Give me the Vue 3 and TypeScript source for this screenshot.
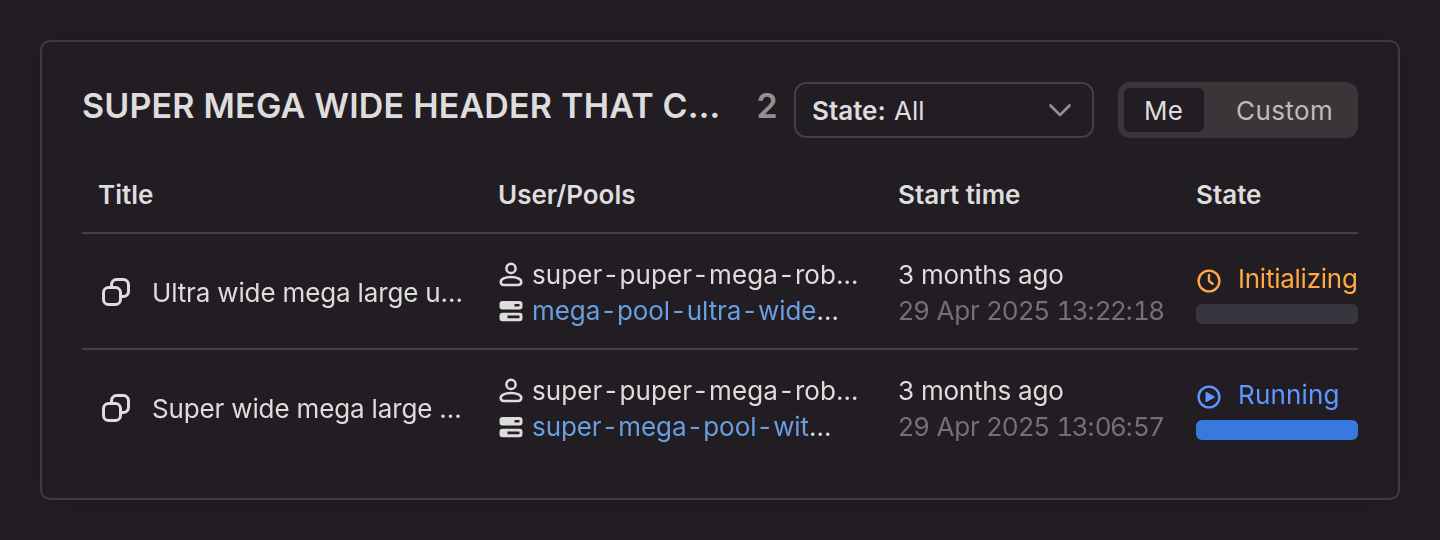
<script setup lang="ts">
interface Operation {
  title: string
  user: string
  pool: string
  relative: string
  date: string
  time: string
  state: 'initializing' | 'running'
  label: string
}

const columns: string[] = ['Title', 'User/Pools', 'Start time', 'State']

const operations: Operation[] = [
  {
    title: 'Ultra wide mega large u…',
    user: 'super-puper-mega-rob…',
    pool: 'mega-pool-ultra-wide',
    relative: '3 months ago',
    date: '29 Apr 2025',
    time: '13:22:18',
    state: 'initializing',
    label: 'Initializing',
  },
  {
    title: 'Super wide mega large …',
    user: 'super-puper-mega-rob…',
    pool: 'super-mega-pool-wit',
    relative: '3 months ago',
    date: '29 Apr 2025',
    time: '13:06:57',
    state: 'running',
    label: 'Running',
  },
]

// Splits a string into runs so that colons keep their proportional width.
function runs(text: string): string[] {
  return text.split(/(:)/)
}
</script>

<template>
  <main class="page">
    <section class="card">
      <header class="head">
        <h2 class="heading">SUPER MEGA WIDE HEADER THAT C…</h2>
        <span class="count">2</span>
        <button class="select" type="button">
          <span class="value"><b>State:</b> All</span>
          <svg class="chevron" width="24" height="24" viewBox="0 0 24 24">
            <path d="M2.500 7.500 12 17l9.500-9.500" fill="none" stroke="currentColor" stroke-width="2.800" stroke-linecap="round" stroke-linejoin="round" />
          </svg>
        </button>
        <div class="switch">
          <button class="option active" type="button">Me</button>
          <button class="option" type="button">Custom</button>
        </div>
      </header>

      <div class="row labels">
        <div v-for="column in columns" :key="column" class="cell">{{ column }}</div>
      </div>
      <div class="body">
        <div v-for="op in operations" :key="op.time" class="row item">
          <div class="cell title">
            <svg width="32" height="32" viewBox="0 0 32 32" fill="none" stroke="currentColor" stroke-width="3">
              <rect x="3.500" y="11.500" width="17" height="17" rx="5" />
              <path d="M11.500 11.500V8.500a5 5 0 0 1 5-5h7a5 5 0 0 1 5 5v7a5 5 0 0 1-5 5h-3" />
            </svg>
            <span>{{ op.title }}</span>
          </div>
          <div class="cell stack">
            <div class="line">
              <svg width="26" height="26" viewBox="0 0 26 26" fill="none" stroke="currentColor" stroke-width="2.500">
                <circle cx="13" cy="6.400" r="4.600" />
                <path d="M13 15c6 0 10.300 2.200 10.300 5 0 2-1.500 2.900-3.300 2.900H6c-1.800 0-3.300-.9-3.300-2.900 0-2.800 4.300-5 10.300-5z" />
              </svg>
              <span class="name">{{ op.user }}</span>
            </div>
            <div class="line">
              <svg width="26" height="26" viewBox="0 0 26 26">
                <path fill="currentColor" fill-rule="evenodd" d="M4.500 3h17a3 3 0 0 1 3 3v2.500a3 3 0 0 1-3 3h-17a3 3 0 0 1-3-3V6a3 3 0 0 1 3-3zM16.500 6v2.600h5V6zM4.500 14.700h17a3 3 0 0 1 3 3v2.500a3 3 0 0 1-3 3h-17a3 3 0 0 1-3-3v-2.500a3 3 0 0 1 3-3zM9.500 17.500v2.800h12v-2.800z" />
              </svg>
              <span class="name"><a class="link">{{ op.pool }}</a>…</span>
            </div>
          </div>
          <div class="cell stack">
            <div class="line relative">{{ op.relative }}</div>
            <div class="muted">
              <span class="date">{{ op.date }}&nbsp;</span>
              <span v-for="(run, i) in runs(op.time)" :key="i" :class="run === ':' ? 'colon' : 'digits'">{{ run }}</span>
            </div>
          </div>
          <div class="cell state" :class="op.state">
            <div class="status">
              <svg width="26" height="26" viewBox="0 0 26 26" fill="none" stroke="currentColor" stroke-width="2.400">
                <circle cx="13" cy="13" r="10.400" />
                <path v-if="op.state === 'initializing'" d="M13 7v6l3.600 2.800" stroke-linecap="round" stroke-linejoin="round" />
                <path v-else d="M10.300 8.700v8.600l7.600-4.300z" fill="currentColor" stroke-width="1.500" stroke-linejoin="round" />
              </svg>
              <span>{{ op.label }}</span>
            </div>
            <div class="bar"></div>
          </div>
        </div>
      </div>
    </section>
  </main>
</template>

<style>
body {
  margin: 0;
  background: #221d22;
}
</style>

<style scoped>
.page {
  box-sizing: border-box;
  height: 540px;
  padding: 40px;
  background: #221d22;
  color: #dedddd;
  font: 400 26px/36px Inter, sans-serif;
}
.card {
  box-sizing: border-box;
  height: 460px;
  padding: 40px;
  border: 2px solid #3f3c41;
  border-radius: 10px;
  background: #221d22;
  box-shadow: 0 0 40px rgba(0, 0, 0, 0.1);
}
button {
  margin: 0;
  border: 0;
  background: none;
  color: inherit;
  font: inherit;
}
svg {
  flex: none;
}
.head {
  display: flex;
  height: 56px;
}
.heading {
  width: 674.5px;
  margin: 0;
  font-size: 34px;
  font-weight: 600;
  line-height: 48px;
  letter-spacing: 0.18px;
  word-spacing: 0.1px;
  white-space: nowrap;
}
.count {
  width: 37.5px;
  font-size: 34px;
  font-weight: 600;
  line-height: 48px;
  opacity: 0.6;
}
.select {
  display: flex;
  box-sizing: border-box;
  width: 300px;
  margin-right: 24px;
  padding: 0 20px 0 16px;
  align-items: center;
  justify-content: space-between;
  border: 2px solid #433f43;
  border-radius: 12px;
}
.value {
  padding-top: 2px;
  word-spacing: 1px;
}
.select b {
  font-weight: 600;
}
.chevron {
  color: #908e90;
}
.switch {
  display: flex;
  box-sizing: border-box;
  width: 240px;
  padding: 6px;
  border-radius: 12px;
  background: #3a3538;
}
.option {
  flex: 1;
  padding: 2px 0 0 32px;
  border-radius: 6px;
  color: #bdbbbc;
  letter-spacing: 0.4px;
  text-align: left;
}
.option.active {
  flex: 0 0 80px;
  padding-left: 20px;
  background: #221d22;
  color: #dedddd;
  letter-spacing: 0.2px;
}
.row {
  display: grid;
  grid-template-columns: 400px 400px 298px 178px;
}
.labels {
  height: 94px;
  border-bottom: 2px solid #433f43;
  font-weight: 600;
}
.labels .cell {
  padding-top: 39px;
}
.cell {
  padding-left: 16px;
  white-space: nowrap;
}
.body {
  will-change: transform;
}
.item {
  height: 114px;
}
.item + .item {
  border-top: 2px solid #433f43;
}
.title {
  display: flex;
  gap: 20px;
  padding-left: 18px;
  padding-top: 41px;
  letter-spacing: -0.15px;
}
.title svg {
  margin-top: 1px;
}
.stack {
  padding-top: 23px;
}
.line {
  display: flex;
  align-items: center;
  gap: 8px;
}
.name {
  font-feature-settings: 'tnum', 'calt' 0;
  letter-spacing: 0.1px;
}
.relative {
  letter-spacing: -0.22px;
}
.muted {
  display: flex;
  color: #737076;
}
.date {
  letter-spacing: -0.25px;
}
.digits {
  font-feature-settings: 'tnum';
  letter-spacing: -1.5px;
}
.link {
  color: #6a9fdf;
  letter-spacing: -0.08px;
}
.state {
  padding-top: 27px;
}
.status {
  display: flex;
  align-items: center;
  gap: 16px;
}
.status svg {
  margin-top: 4px;
}
.bar {
  height: 20px;
  margin-top: 7px;
  border-radius: 6px;
}
.initializing {
  color: #ffa943;
  letter-spacing: -0.25px;
}
.initializing .bar {
  background: #38353e;
}
.running {
  color: #5c98ff;
  letter-spacing: 0.15px;
}
.running .bar {
  background: #3979de;
}
</style>
